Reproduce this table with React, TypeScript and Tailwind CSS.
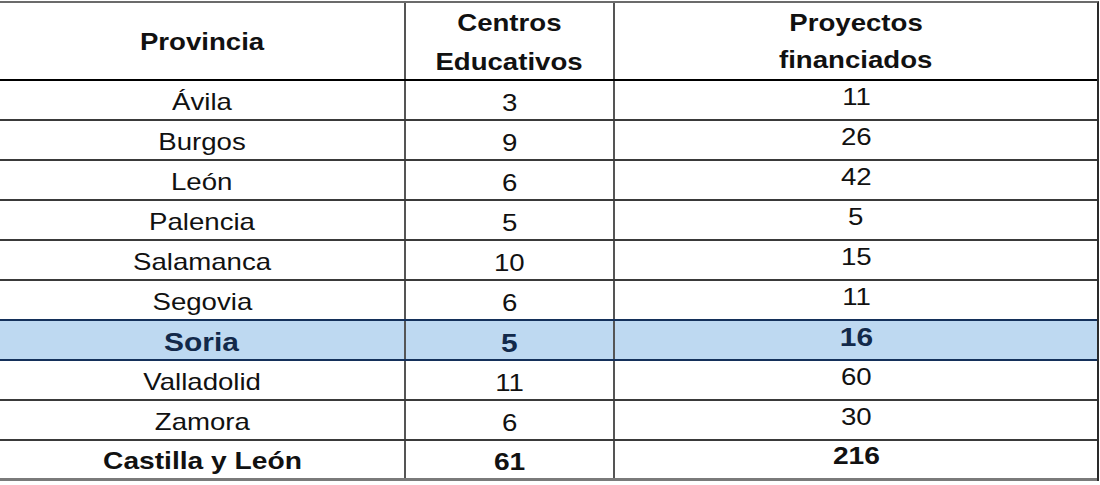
import React from "react";

type Row = { p: string; c: string; f: string; kind?: "soria" | "total" };

const rows: Row[] = [
  { p: "Ávila", c: "3", f: "11" },
  { p: "Burgos", c: "9", f: "26" },
  { p: "León", c: "6", f: "42" },
  { p: "Palencia", c: "5", f: "5" },
  { p: "Salamanca", c: "10", f: "15" },
  { p: "Segovia", c: "6", f: "11" },
  { p: "Soria", c: "5", f: "16", kind: "soria" },
  { p: "Valladolid", c: "11", f: "60" },
  { p: "Zamora", c: "6", f: "30" },
  { p: "Castilla y León", c: "61", f: "216", kind: "total" },
];

function T({ children, className = "" }: { children: React.ReactNode; className?: string }) {
  return <span className={"inline-block scale-x-[1.15] whitespace-nowrap " + className}>{children}</span>;
}

export default function App() {
  return (
    <div className="w-[1100px] h-[485px] bg-white overflow-hidden" style={{ fontFamily: '"Liberation Sans", Arial, sans-serif' }}>
      <div className="w-[1099px] mt-[1px] border-t-2 border-r-2 border-t-[#6b6b6b] border-r-[#2a2a2a] text-[24px] text-[#111] leading-none">
        <div className="grid grid-cols-[406px_209px_1fr] h-[78px] border-b-2 border-black font-bold">
          <div className="flex items-center justify-center border-r-2 border-[#555] pt-[2px]">
            <T>Provincia</T>
          </div>
          <div className="flex flex-col items-center justify-start gap-[15px] border-r-2 border-[#555] pt-[8px]">
            <T>Centros</T>
            <T>Educativos</T>
          </div>
          <div className="flex flex-col items-center justify-start gap-[13px] pt-[8px]">
            <T>Proyectos</T>
            <T>financiados</T>
          </div>
        </div>
        {rows.map((r, i) => {
          const soria = r.kind === "soria";
          const total = r.kind === "total";
          const nextSoria = rows[i + 1]?.kind === "soria";
          const border = soria || nextSoria ? "border-[#14305a]" : total ? "border-[#7a7a7a]" : "border-[#3a3a3a]";
          const txt = soria ? "font-bold text-[#12294a] text-[26px]" : total ? "font-bold text-[24.5px]" : "";
          return (
            <div
              key={r.p}
              className={
                "grid grid-cols-[406px_209px_1fr] h-[40px] border-b-2 " +
                border +
                (soria ? " bg-[#bed9f1]" : "") +
                (total ? " border-b-[3px]" : "")
              }
            >
              <div className="flex items-center justify-center border-r-2 border-[#555] pt-[4px]">
                <T className={txt}>{r.p}</T>
              </div>
              <div className="flex items-center justify-center border-r-2 border-[#555] pt-[6px]">
                <T className={txt}>{r.c}</T>
              </div>
              <div className="flex items-center justify-center pb-[6px]">
                <T className={txt}>{r.f}</T>
              </div>
            </div>
          );
        })}
      </div>
    </div>
  );
}
